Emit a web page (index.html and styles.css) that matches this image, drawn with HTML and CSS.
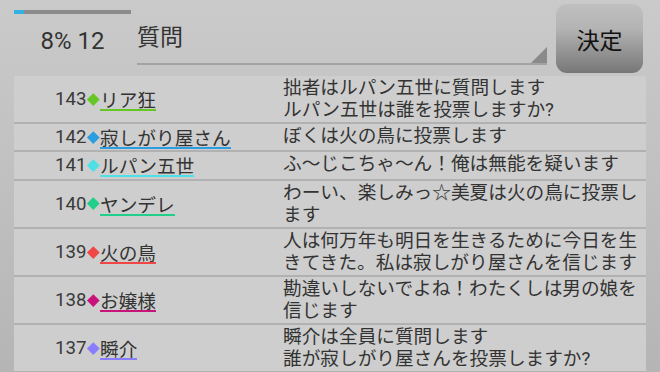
FILE: index.html
```html
<!DOCTYPE html>
<html lang="ja">
<head>
<meta charset="utf-8">
<link rel="stylesheet" href="styles.css">
</head>
<body>
<div class="screen">
  <header class="top">
    <div class="progress-col">
      <div class="bar"><div class="fill"></div></div>
      <div class="count">8% 12</div>
    </div>
    <div class="question">
      <span class="qtext">質問</span>
      <span class="corner"></span>
    </div>
    <button class="decide">決定</button>
  </header>
  <div class="list">
    <div class="row">
      <div class="who"><span class="num">143</span><span class="dia c-green"></span><span class="name c-green">リア狂</span></div>
      <div class="msg">拙者はルパン五世に質問します<br>ルパン五世は誰を投票しますか?</div>
    </div>
    <div class="row">
      <div class="who"><span class="num">142</span><span class="dia c-blue"></span><span class="name c-blue">寂しがり屋さん</span></div>
      <div class="msg">ぼくは火の鳥に投票します</div>
    </div>
    <div class="row">
      <div class="who"><span class="num">141</span><span class="dia c-cyan"></span><span class="name c-cyan">ルパン五世</span></div>
      <div class="msg">ふ〜じこちゃ〜ん！俺は無能を疑います</div>
    </div>
    <div class="row">
      <div class="who"><span class="num">140</span><span class="dia c-teal"></span><span class="name c-teal">ヤンデレ</span></div>
      <div class="msg">わーい、楽しみっ☆美夏は火の鳥に投票します</div>
    </div>
    <div class="row">
      <div class="who"><span class="num">139</span><span class="dia c-red"></span><span class="name c-red">火の鳥</span></div>
      <div class="msg">人は何万年も明日を生きるために今日を生きてきた。私は寂しがり屋さんを信じます</div>
    </div>
    <div class="row">
      <div class="who"><span class="num">138</span><span class="dia c-magenta"></span><span class="name c-magenta">お嬢様</span></div>
      <div class="msg">勘違いしないでよね！わたくしは男の娘を信じます</div>
    </div>
    <div class="row">
      <div class="who"><span class="num">137</span><span class="dia c-purple"></span><span class="name c-purple">瞬介</span></div>
      <div class="msg">瞬介は全員に質問します<br>誰が寂しがり屋さんを投票しますか?</div>
    </div>
  </div>
</div>
</body>
</html>
```

FILE: styles.css
```css
* { box-sizing: border-box; }
html, body {
  margin: 0;
  padding: 0;
}
body {
  width: 660px;
  height: 372px;
  overflow: hidden;
  font-family: Roboto, "Noto Sans CJK JP", sans-serif;
  color: #333;
}
.screen {
  width: 660px;
  height: 372px;
  background: linear-gradient(#cacaca, #c4c4c4 30%, #b5b5b5);
  display: flex;
  flex-direction: column;
}
.top {
  height: 76px;
  flex: none;
  display: flex;
  align-items: flex-start;
  padding-left: 14px;
}
.progress-col {
  width: 117px;
  padding-top: 10px;
  display: flex;
  flex-direction: column;
  align-items: center;
}
.bar {
  width: 117px;
  height: 4px;
  background: #8b8b8b;
}
.fill {
  width: 10px;
  height: 4px;
  background: #33b1e3;
}
.count {
  margin-top: 13px;
  font-size: 24px;
  line-height: 28px;
  color: #333;
}
.question {
  margin-left: 6px;
  width: 410px;
  height: 65px;
  position: relative;
  border-bottom: 2px solid #a3a3a3;
  padding-top: 19px;
}
.qtext {
  font-family: "Noto Sans CJK JP", sans-serif;
  font-size: 23px;
  line-height: 32px;
  color: #333;
}
.corner {
  position: absolute;
  right: 0;
  bottom: 0;
  width: 0;
  height: 0;
  border-style: solid;
  border-width: 0 0 16px 16px;
  border-color: transparent transparent #8a8a8a transparent;
}
.decide {
  margin-left: 9px;
  margin-top: 4px;
  width: 87px;
  height: 69px;
  border: none;
  border-radius: 11px;
  background: linear-gradient(#c0c0c0, #b4b4b4 35%, #777777);
  font-family: "Noto Sans CJK JP", sans-serif;
  font-size: 23px;
  color: #111;
  padding: 0;
}
.list {
  margin: 0 14px;
  background: #cecece;
  flex: 1;
  font-size: 18.67px;
}
.row {
  display: flex;
  padding: 1.1px 0;
  border-bottom: 2px solid #b1b1b1;
}
.who {
  width: 269px;
  padding-left: 41px;
  display: flex;
  align-items: center;
}
.num {
  line-height: 22px;
  color: #3a3a3a;
}
.dia {
  width: 8.6px;
  height: 8.6px;
  margin: 0 2.4px 0 2.6px;
  transform: rotate(45deg);
}
.name {
  line-height: 19px;
  padding: 2px 0 1px;
  border-bottom: 2px solid;
  color: #333;
  font-family: "Noto Sans CJK JP", sans-serif;
}
.msg {
  flex: 1;
  line-height: 22px;
  line-break: strict;
  color: #333;
}
.dia.c-green { background: #66c624; }
.dia.c-blue { background: #2a9ee0; }
.dia.c-cyan { background: #4de0e6; }
.dia.c-teal { background: #1fcf8a; }
.dia.c-red { background: #f04646; }
.dia.c-magenta { background: #c8137a; }
.dia.c-purple { background: #8a7cff; }
.name.c-green { border-color: #66c624; }
.name.c-blue { border-color: #2a9ee0; }
.name.c-cyan { border-color: #4de0e6; }
.name.c-teal { border-color: #1fcf8a; }
.name.c-red { border-color: #f04646; }
.name.c-magenta { border-color: #c8137a; }
.name.c-purple { border-color: #8a7cff; }
```
